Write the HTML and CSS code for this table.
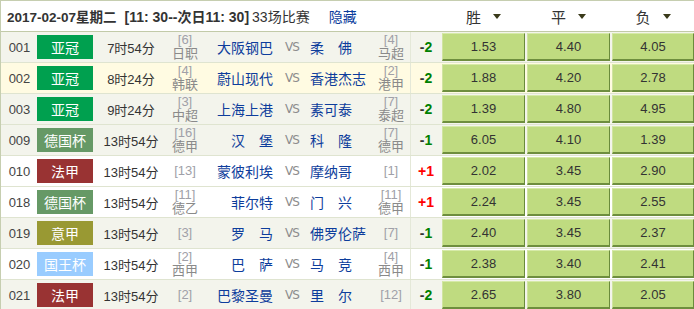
FILE: index.html
```html
<!DOCTYPE html>
<html lang="zh">
<head>
<meta charset="utf-8">
<link rel="stylesheet" href="styles.css">
</head>
<body>
<div class="board">
  <div class="head">
    <div class="title"><b class="date">2017-02-07星期二</b><b class="period">[11: 30--次日11: 30]</b><span class="count">33场比赛</span><a class="hide">隐藏</a></div>
    <div class="odds">
      <div class="hcell">胜<i class="tri"></i></div>
      <div class="hcell">平<i class="tri"></i></div>
      <div class="hcell">负<i class="tri"></i></div>
    </div>
  </div>

  <div class="row gray">
    <div class="no">001</div>
    <div class="lg"><span class="badge acl">亚冠</span></div>
    <div class="time">7时54分</div>
    <div class="rank"><span class="rk">[6]</span><span class="lname">日职</span></div>
    <div class="home">大阪钢巴</div>
    <div class="vs">VS</div>
    <div class="away">柔　佛</div>
    <div class="rank"><span class="rk">[4]</span><span class="lname">马超</span></div>
    <div class="hc"><span class="m">-</span><span class="g">2</span></div>
    <div class="odds"><div class="cell">1.53</div><div class="cell">4.40</div><div class="cell">4.05</div></div>
  </div>

  <div class="row yellow">
    <div class="no">002</div>
    <div class="lg"><span class="badge acl">亚冠</span></div>
    <div class="time">8时24分</div>
    <div class="rank"><span class="rk">[4]</span><span class="lname">韩联</span></div>
    <div class="home">蔚山现代</div>
    <div class="vs">VS</div>
    <div class="away">香港杰志</div>
    <div class="rank"><span class="rk">[2]</span><span class="lname">港甲</span></div>
    <div class="hc"><span class="m">-</span><span class="g">2</span></div>
    <div class="odds"><div class="cell">1.88</div><div class="cell">4.20</div><div class="cell">2.78</div></div>
  </div>

  <div class="row gray">
    <div class="no">003</div>
    <div class="lg"><span class="badge acl">亚冠</span></div>
    <div class="time">9时24分</div>
    <div class="rank"><span class="rk">[3]</span><span class="lname">中超</span></div>
    <div class="home">上海上港</div>
    <div class="vs">VS</div>
    <div class="away">素可泰</div>
    <div class="rank"><span class="rk">[7]</span><span class="lname">泰超</span></div>
    <div class="hc"><span class="m">-</span><span class="g">2</span></div>
    <div class="odds"><div class="cell">1.39</div><div class="cell">4.80</div><div class="cell">4.95</div></div>
  </div>

  <div class="row gray">
    <div class="no">009</div>
    <div class="lg"><span class="badge dfb">德国杯</span></div>
    <div class="time">13时54分</div>
    <div class="rank"><span class="rk">[16]</span><span class="lname">德甲</span></div>
    <div class="home">汉　堡</div>
    <div class="vs">VS</div>
    <div class="away">科　隆</div>
    <div class="rank"><span class="rk">[7]</span><span class="lname">德甲</span></div>
    <div class="hc"><span class="m">-</span><span class="g">1</span></div>
    <div class="odds"><div class="cell">6.05</div><div class="cell">4.10</div><div class="cell">1.39</div></div>
  </div>

  <div class="row white">
    <div class="no">010</div>
    <div class="lg"><span class="badge l1">法甲</span></div>
    <div class="time">13时54分</div>
    <div class="rank"><span class="rk">[13]</span></div>
    <div class="home">蒙彼利埃</div>
    <div class="vs">VS</div>
    <div class="away">摩纳哥</div>
    <div class="rank"><span class="rk">[1]</span></div>
    <div class="hc red">+1</div>
    <div class="odds"><div class="cell">2.02</div><div class="cell">3.45</div><div class="cell">2.90</div></div>
  </div>

  <div class="row white">
    <div class="no">018</div>
    <div class="lg"><span class="badge dfb">德国杯</span></div>
    <div class="time">13时54分</div>
    <div class="rank"><span class="rk">[11]</span><span class="lname">德乙</span></div>
    <div class="home">菲尔特</div>
    <div class="vs">VS</div>
    <div class="away">门　兴</div>
    <div class="rank"><span class="rk">[11]</span><span class="lname">德甲</span></div>
    <div class="hc red">+1</div>
    <div class="odds"><div class="cell">2.24</div><div class="cell">3.45</div><div class="cell">2.55</div></div>
  </div>

  <div class="row gray">
    <div class="no">019</div>
    <div class="lg"><span class="badge sa">意甲</span></div>
    <div class="time">13时54分</div>
    <div class="rank"><span class="rk">[3]</span></div>
    <div class="home">罗　马</div>
    <div class="vs">VS</div>
    <div class="away">佛罗伦萨</div>
    <div class="rank"><span class="rk">[7]</span></div>
    <div class="hc"><span class="m">-</span><span class="g">1</span></div>
    <div class="odds"><div class="cell">2.40</div><div class="cell">3.45</div><div class="cell">2.37</div></div>
  </div>

  <div class="row white">
    <div class="no">020</div>
    <div class="lg"><span class="badge cdr">国王杯</span></div>
    <div class="time">13时54分</div>
    <div class="rank"><span class="rk">[2]</span><span class="lname">西甲</span></div>
    <div class="home">巴　萨</div>
    <div class="vs">VS</div>
    <div class="away">马　竞</div>
    <div class="rank"><span class="rk">[4]</span><span class="lname">西甲</span></div>
    <div class="hc"><span class="m">-</span><span class="g">1</span></div>
    <div class="odds"><div class="cell">2.38</div><div class="cell">3.40</div><div class="cell">2.41</div></div>
  </div>

  <div class="row gray">
    <div class="no">021</div>
    <div class="lg"><span class="badge l1">法甲</span></div>
    <div class="time">13时54分</div>
    <div class="rank"><span class="rk">[2]</span></div>
    <div class="home">巴黎圣曼</div>
    <div class="vs">VS</div>
    <div class="away">里　尔</div>
    <div class="rank"><span class="rk">[12]</span></div>
    <div class="hc"><span class="m">-</span><span class="g">2</span></div>
    <div class="odds"><div class="cell">2.65</div><div class="cell">3.80</div><div class="cell">2.05</div></div>
  </div>
</div>
</body>
</html>
```

FILE: styles.css
```css
* { box-sizing: border-box; }
html, body { margin: 0; padding: 0; background: #fff; }
body {
  font-family: "Liberation Sans", "Noto Sans CJK SC", sans-serif;
  font-size: 13px;
  color: #333;
}
.board {
  width: 694px;
  border-left: 1px solid #c6ceb0;
  border-top: 1px solid #c6ceb0;
}
.head {
  display: grid;
  grid-template-columns: 440px 1fr;
  height: 31px;
  border-bottom: 1px solid #c2caa8;
  background: #fff;
}
.title {
  display: flex;
  align-items: center;
  padding-left: 6px;
  white-space: nowrap;
  color: #333;
}
.date { font-weight: bold; font-size: 13.5px; color: #333; }
.period { font-weight: bold; font-size: 14px; color: #333; margin-left: 8px; }
.count { margin-left: 3px; color: #333; font-size: 14px; }
.hide { margin-left: 19px; color: #0a3d9c; text-decoration: none; font-size: 14px; }
.head .odds { padding: 0 0 0 1px; }
.hcell {
  display: flex;
  align-items: center;
  justify-content: center;
  font-size: 15px;
  color: #333;
}
.tri {
  display: inline-block;
  width: 0; height: 0;
  margin-left: 12px;
  border-left: 4px solid transparent;
  border-right: 4px solid transparent;
  border-top: 5px solid #3a3a1a;
}
.row {
  display: grid;
  grid-template-columns: 36px 63px 62px 46px 71px 26px 67px 38px 31px 1fr;
  height: 31px;
  border-bottom: 1px solid #dfe4d0;
  align-items: center;
}
.gray { background: #f3f4ec; }
.yellow { background: #fffbe2; }
.white { background: #fff; }
.no { text-align: center; color: #444; font-size: 13px; padding-left: 1px; }
.lg { display: flex; align-items: center; }
.badge {
  display: flex;
  align-items: center;
  justify-content: center;
  width: 56px;
  height: 24px;
  color: #fff;
  font-size: 14px;
}
.acl { background: #00a04f; }
.dfb { background: #669966; }
.l1 { background: #993333; }
.sa { background: #999933; }
.cdr { background: #99ccff; }
.time { text-align: center; color: #333; }
.rank {
  display: flex;
  flex-direction: column;
  align-items: center;
  justify-content: center;
  color: #999;
}
.rk { font-size: 13px; line-height: 12px; height: 12px; color: #a0a0a8; }
.lname { font-size: 13px; line-height: 13px; height: 13px; margin-top: 1px; color: #8a8a8a; }
.home { text-align: right; padding-right: 6px; color: #0d3d9c; font-size: 14px; white-space: nowrap; }
.away { text-align: left; padding-left: 5px; color: #0d3d9c; font-size: 14px; white-space: nowrap; }
.vs { text-align: center; color: #8c8c8c; font-family: "DejaVu Sans", sans-serif; font-size: 12px; letter-spacing: -1px; }
.hc {
  align-self: stretch;
  display: flex;
  align-items: center;
  justify-content: center;
  border-left: 1px solid #e4e8d8;
  font-weight: bold;
  font-size: 14px;
}
.hc .m { color: #333; }
.hc .g { color: #008000; }
.hc.red { color: #ff0000; }
.odds {
  display: grid;
  grid-template-columns: 83px 83px 1fr;
  column-gap: 2px;
  padding: 1px 0 1px 1px;
  height: 100%;
}
.cell {
  display: flex;
  align-items: center;
  justify-content: center;
  background: #bfdb80;
  border-top: 1px solid #d6eaa8;
  border-left: 1px solid #d0e4a0;
  border-right: 1px solid #6a8a3c;
  border-bottom: 2px solid #6e8e3e;
  color: #333;
  font-size: 13px;
}
```
